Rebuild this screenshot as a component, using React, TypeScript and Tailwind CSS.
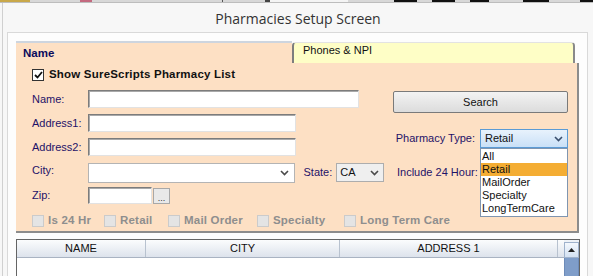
import React from 'react';

const label = "text-[11px] leading-[13px] text-[#1f1268]";

function Chevron({ color = '#4a4a4a' }: { color?: string }) {
  return (
    <svg width="9" height="6" viewBox="0 0 9 6" className="shrink-0">
      <polyline points="1,1 4.5,4.5 8,1" fill="none" stroke={color} strokeWidth="1.6" />
    </svg>
  );
}

function TextBox({ w }: { w: string }) {
  return (
    <div className={`${w} h-full bg-white border border-[#7c7c7c] border-b-[#e2e2e2] border-r-[#e2e2e2] shadow-[inset_1px_1px_0_#a9a9a9]`} />
  );
}

function DisabledCheck({ text, w }: { text: string; w: string }) {
  return (
    <div className={`${w} shrink-0 flex items-center gap-[4px]`}>
      <div className="w-[12px] h-[12px] shrink-0 bg-[#e4e4e4] border border-[#cbcbcb]" />
      <span className="whitespace-nowrap text-[11.5px] font-bold tracking-[0.2px] text-[#8e8e8e]">{text}</span>
    </div>
  );
}

function TopStrip() {
  return (
    <div className="flex h-[3px] bg-[#d8d8d8] border-b border-[#bdbdbd]">
      <div className="w-[30px] bg-[#c9a84a]" />
      <div className="w-[50px]" />
      <div className="w-[12px] bg-[#c46a80]" />
      <div className="w-[130px]" />
      <div className="w-px bg-[#555]" />
      <div className="w-[42px]" />
      <div className="w-[5px] bg-[#444]" />
      <div className="w-[78px] bg-[#f4f4f4]" />
      <div className="w-[46px]" />
      <div className="w-[23px] bg-[#111]" />
      <div className="w-[15px]" />
      <div className="w-[23px] bg-[#111]" />
      <div className="w-[15px]" />
      <div className="w-[19px] bg-[#111]" />
      <div className="w-[34px]" />
      <div className="w-[26px] bg-[#111]" />
      <div className="w-[31px]" />
      <div className="flex-1 bg-[#111]" />
    </div>
  );
}

export default function App() {
  return (
    <div className="w-[593px] h-[276px] overflow-hidden bg-[#f7f7f7] font-['Liberation_Sans',Arial,sans-serif]">
      <TopStrip />
      <div className="flex h-[273px]">
        <div className="w-[2px]" />
        <div className="w-px bg-[#d0d0d0]" />
        <div className="flex-1 flex flex-col">
          <div className="h-[29px] shrink-0 flex items-center justify-center pt-[1px] text-[14px] text-[#333] font-['Open_Sans','Liberation_Sans',sans-serif]">
            Pharmacies Setup Screen
          </div>
          <div className="ml-[4px] w-[581px] flex-1 border border-b-0 border-[#d9d9d9] bg-[#fdfdfd] pl-[8px] pt-[8px]">
            {/* tabs */}
            <div className="flex h-[22px] w-[563px]">
              <div className="w-[276px] bg-[#fde0c4] border-t-[2px] border-[#cdd5df] pl-[7px] pt-[3px] text-[11.5px] leading-[14px] font-bold text-[#0b0b5c]">
                Name
              </div>
              <div className="w-[283px] mt-px bg-[#fefec6] border-l-[2px] border-r-[2px] border-t border-l-[#7e7e7e] border-r-[#8a8a8a] border-t-[#e3e3e3] rounded-tl-[4px] rounded-tr-[4px] pl-[9px] pt-[1px] text-[11px] leading-[13px] text-[#111]">
                Phones &amp; NPI
              </div>
            </div>
            {/* panel */}
            <div className="w-[563px] h-[170px] bg-[#fde0c4] border-r-[2px] border-b-[2px] border-[#8c8c8c] pl-[16px] flex">
              <div className="w-[352px] flex flex-col">
                <div className="mt-[5px] h-[13px] flex items-center gap-[5px]">
                  <div className="w-[12px] h-[12px] bg-white border border-[#333] flex items-center justify-center">
                    <svg width="9" height="8" viewBox="0 0 9 8">
                      <polyline points="1,4 3.5,6.5 8,1" fill="none" stroke="#111" strokeWidth="1.8" />
                    </svg>
                  </div>
                  <span className="text-[11.5px] font-bold tracking-[0.2px] text-[#111]">Show SureScripts Pharmacy List</span>
                </div>
                <div className="mt-[9px] h-[18px] flex items-center">
                  <span className={`w-[56px] ${label}`}>Name:</span>
                  <TextBox w="w-[271px]" />
                </div>
                <div className="mt-[6px] h-[18px] flex items-center">
                  <span className={`w-[56px] ${label}`}>Address1:</span>
                  <TextBox w="w-[208px]" />
                </div>
                <div className="mt-[6px] h-[18px] flex items-center">
                  <span className={`w-[56px] ${label}`}>Address2:</span>
                  <TextBox w="w-[208px]" />
                </div>
                <div className="mt-[7px] h-[20px] flex items-start">
                  <span className={`w-[56px] pt-px ${label}`}>City:</span>
                  <div className="w-[209px] h-full bg-white border border-[#b4b4b4] flex items-center justify-end pr-[5px]">
                    <Chevron />
                  </div>
                  <span className={`ml-[8px] mt-[3px] ${label}`}>State:</span>
                  <div className="ml-[4px] w-[48px] h-[19px] bg-[#efefef] border border-[#adadad] flex items-center justify-between pl-[3px] pr-[4px]">
                    <span className="text-[11px] text-[#111]">CA</span>
                    <Chevron />
                  </div>
                </div>
                <div className="mt-[4px] h-[17px] flex items-center">
                  <span className={`w-[56px] ${label}`}>Zip:</span>
                  <TextBox w="w-[64px]" />
                  <div className="ml-px w-[17px] h-[16px] bg-[#e9e9e9] border border-[#a8a8a8] flex items-end justify-center text-[9px] leading-[10px] text-[#333]">
                    ...
                  </div>
                </div>
                <div className="mt-[10px] h-[13px] flex items-center">
                  <DisabledCheck text="Is 24 Hr" w="w-[72px]" />
                  <DisabledCheck text="Retail" w="w-[64px]" />
                  <DisabledCheck text="Mail Order" w="w-[89px]" />
                  <DisabledCheck text="Specialty" w="w-[87px]" />
                  <DisabledCheck text="Long Term Care" w="w-[110px]" />
                </div>
              </div>
              <div className="ml-[9px] w-[175px] flex flex-col">
                <div className="mt-[28px] h-[22px] rounded-[2px] border border-[#7a7a7a] bg-gradient-to-b from-[#f3f3f3] to-[#dcdcdc] flex items-center justify-center text-[11px] text-[#111]">
                  Search
                </div>
                <div className="mt-[16px] h-[19px] flex items-center justify-end">
                  <span className={label}>Pharmacy Type:</span>
                  <div className="relative ml-[5px] w-[88px] h-full">
                    <div className="h-full border border-[#5b9bd5] bg-gradient-to-b from-[#e8f2fc] to-[#c9e0f7] flex items-center justify-between pl-[4px] pr-[4px]">
                      <span className="text-[11px] text-[#111]">Retail</span>
                      <Chevron color="#3a4f6e" />
                    </div>
                    <div className="absolute left-0 top-full z-10 w-[88px] h-[69px] bg-white border border-[#7f95b0] pt-[1px] text-[11px] leading-[13px] text-[#111]">
                      <div className="pl-px">All</div>
                      <div className="pl-px bg-[#f4ad33]">Retail</div>
                      <div className="pl-px">MailOrder</div>
                      <div className="pl-px">Specialty</div>
                      <div className="pl-px">LongTermCare</div>
                    </div>
                  </div>
                </div>
                <div className={`mt-[17px] pl-[4px] leading-[14px] ${label}`}>Include 24 Hour:</div>
              </div>
            </div>
            {/* grid */}
            <div className="mt-[6px] w-[564px] h-[40px] border border-b-0 border-[#646464] bg-white flex">
              <div className="flex-1 flex flex-col">
                <div className="h-[18px] flex bg-gradient-to-b from-[#fbfcfd] to-[#dde3ec] border-b border-[#a9b3c2] text-[11px] text-[#111]">
                  <div className="w-[129px] border-r border-[#b8c2cf] flex items-center justify-center">NAME</div>
                  <div className="w-[194px] border-r border-[#b8c2cf] flex items-center justify-center">CITY</div>
                  <div className="w-[218px] border-r border-[#b8c2cf] flex items-center justify-center">ADDRESS 1</div>
                  <div className="flex-1" />
                </div>
                <div className="flex-1 bg-white" />
              </div>
              <div className="w-[15px] flex flex-col bg-[#eef2f7]">
                <div className="mt-[2px] h-[16px] border border-[#9fb2cc] bg-gradient-to-b from-[#f4f8fd] to-[#d3e1f2] flex items-center justify-center">
                  <svg width="7" height="4" viewBox="0 0 7 4">
                    <polygon points="0,4 3.5,0 7,4" fill="#222" />
                  </svg>
                </div>
                <div className="flex-1 bg-[#7f9dc9] border-x border-[#6d8bb8]" />
              </div>
            </div>
          </div>
        </div>
      </div>
    </div>
  );
}
